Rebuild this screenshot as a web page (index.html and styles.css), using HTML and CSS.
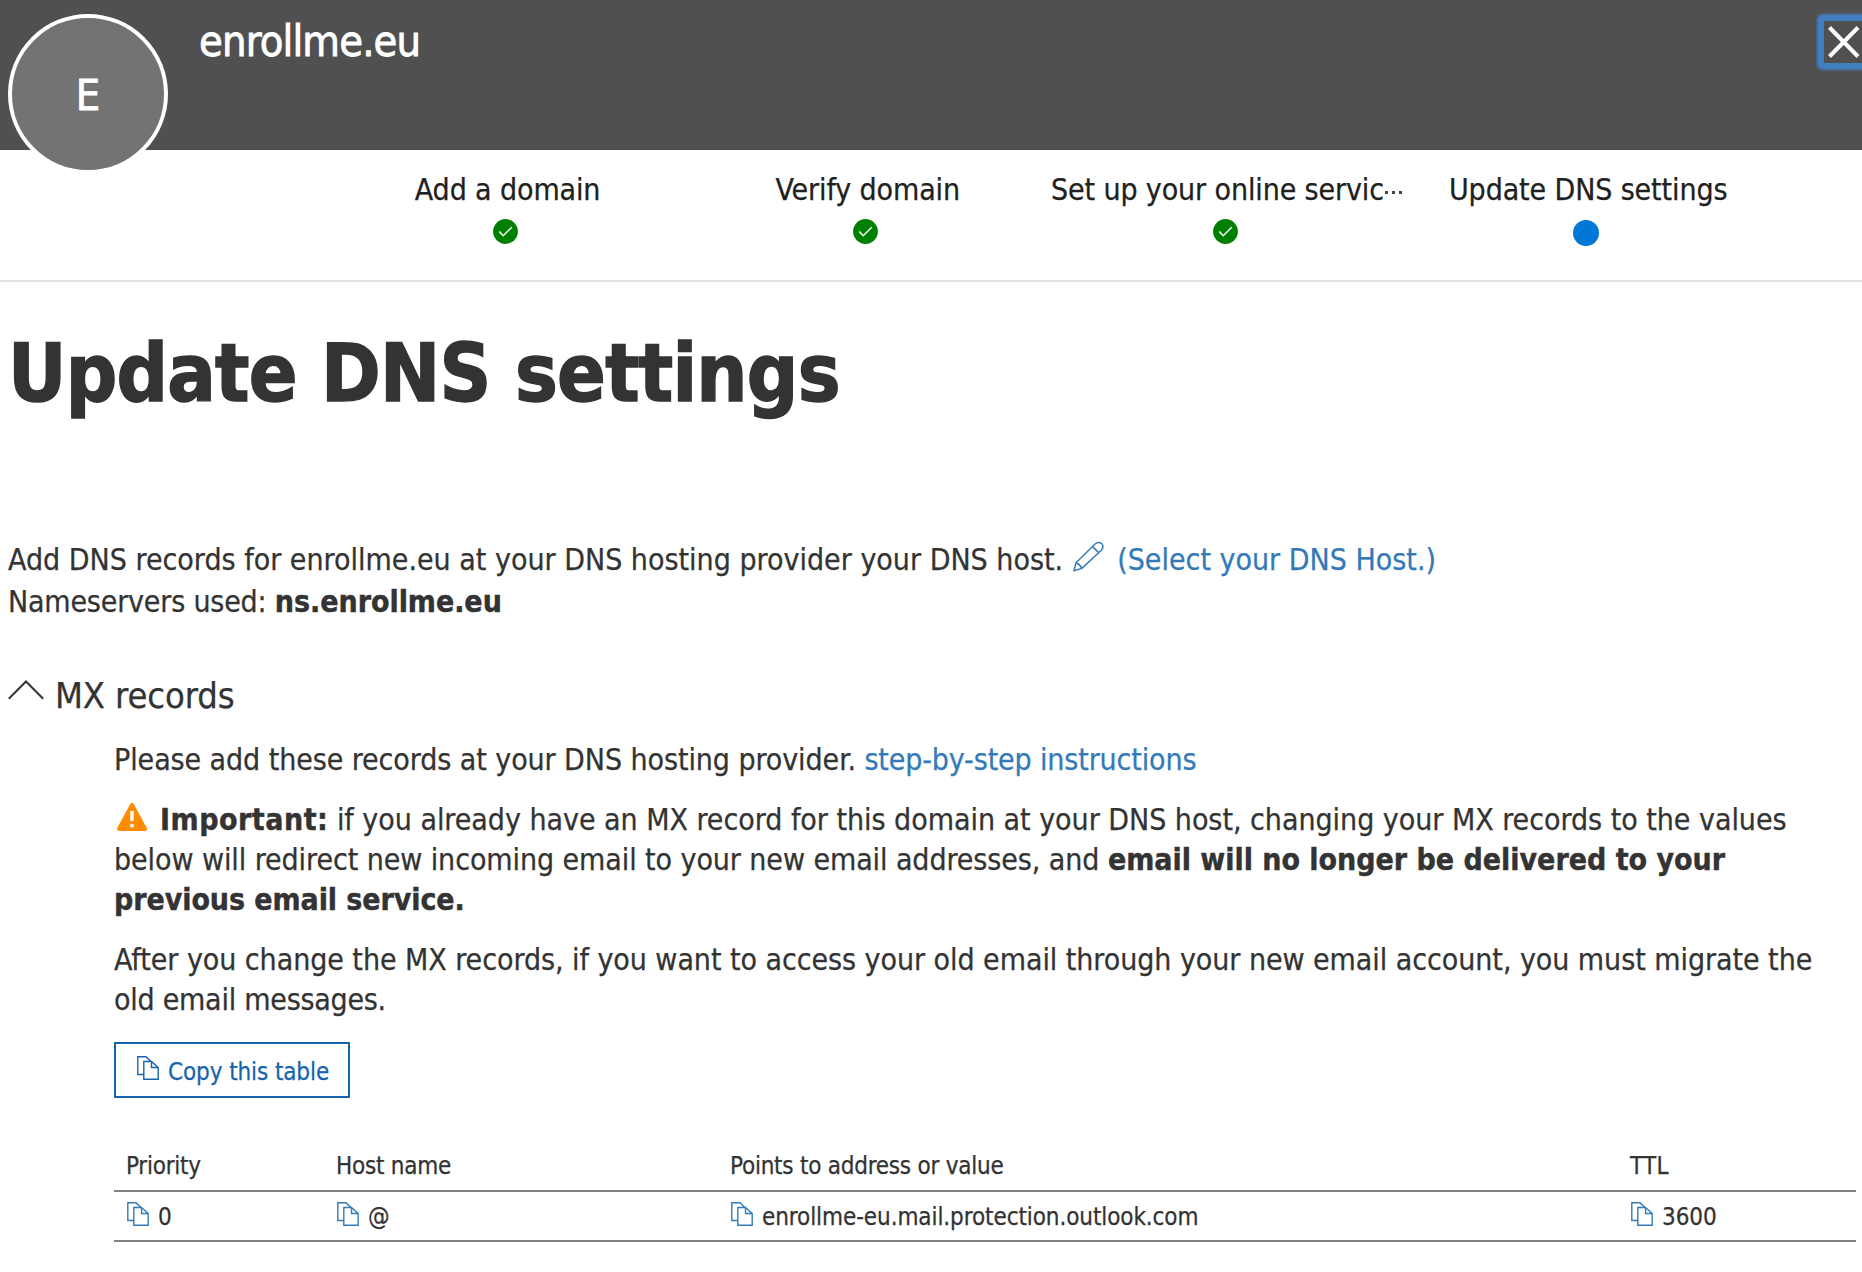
FILE: index.html
```
<!DOCTYPE html>
<html lang="en">
<head>
<meta charset="utf-8">
<title>Update DNS settings</title>
<link rel="stylesheet" href="styles.css">
</head>
<body>
<svg class="defs" width="0" height="0" aria-hidden="true">
  <symbol id="copy" viewBox="0 0 22 24">
    <path d="M6.5 18.5H.8V.8H9L14 5.5M6.8 5.5H14.5L21.2 11.5V23.2H6.8ZM14.5 5.5V11.5H21.2"/>
  </symbol>
  <symbol id="check" viewBox="0 0 25 25">
    <circle cx="12.5" cy="12.5" r="12.4"/>
    <path d="M6.3 12.6L10.2 16.7L18.8 8.3"/>
  </symbol>
</svg>

<header class="banner">
  <div class="avatar"><span>E</span></div>
  <h2 class="domain">enrollme.eu</h2>
  <button class="close" aria-label="Close">
    <svg viewBox="0 0 32 32"><path d="M1.5 1.5L30 30.5M30 1.5L1.5 30.5"/></svg>
  </button>
</header>

<ol class="steps">
  <li class="step"><span>Add a domain</span><svg><use href="#check"/></svg></li>
  <li class="step"><span>Verify domain</span><svg><use href="#check"/></svg></li>
  <li class="step"><span>Set up your online servic<i class="dots"></i></span><svg><use href="#check"/></svg></li>
  <li class="step"><span>Update DNS settings</span><b class="current"></b></li>
</ol>

<main class="content">
  <h1>Update DNS settings</h1>
  <p class="intro"><span>Add DNS records for enrollme.eu at your DNS hosting provider your DNS host.</span><svg class="pencil" viewBox="98 34 94 94"><path d="M101 124L107 100L165 43Q175 34 185 42Q193 52 184 62L125 117ZM157 51L177 70M107 100Q119 104 125 117"/></svg><a>(Select your DNS Host.)</a><br><span class="snug">Nameservers used: <strong>ns.enrollme.eu</strong></span></p>

  <h3 class="group"><svg viewBox="0 0 36 20"><path d="M.8 18.8L18 1.5L35.2 18.8"/></svg><span>MX records</span></h3>

  <section class="records">
    <p>Please add these records at your DNS hosting provider. <a class="guide">step-by-step instructions</a></p>
    <p class="notice"><svg class="warn" viewBox="0 0 30 28"><path class="tri" d="M15 2L28 26H2Z"/><path class="bang" d="M15 8V18"/><circle cx="15" cy="22.8" r="2"/></svg><strong class="important">Important:</strong> <span class="lead">if you already have an MX record for this domain at your DNS host, changing your MX records to the values</span><br>below will redirect new incoming email to your new email addresses, and <strong class="loss">email will no longer be delivered to your</strong><br><strong>previous email service.</strong></p>
    <p class="after">After you change the MX records, if you want to access your old email through your new email account, you must migrate the<br><span class="snug">old email messages.</span></p>
    <button class="copy-table"><svg class="copy"><use href="#copy"/></svg><span>Copy this table</span></button>
    <div class="table">
      <div class="row head"><span>Priority</span><span>Host name</span><span>Points to address or value</span><span class="ttl">TTL</span></div>
      <div class="row"><div><svg class="copy"><use href="#copy"/></svg><span>0</span></div><div><svg class="copy"><use href="#copy"/></svg><span>@</span></div><div><svg class="copy"><use href="#copy"/></svg><span>enrollme-eu.mail.protection.outlook.com</span></div><div><svg class="copy"><use href="#copy"/></svg><span>3600</span></div></div>
    </div>
  </section>
</main>
</body>
</html>
```
FILE: styles.css
```
* { box-sizing: border-box; }
body {
  margin: 0;
  background: #fff;
  color: #333;
  font-family: "DejaVu Sans Condensed", "DejaVu Sans", sans-serif;
  font-stretch: condensed;
  font-size: 30px;
  line-height: 40px;
  white-space: nowrap;
  overflow: hidden;
  -webkit-text-stroke: .25px currentColor;
}
svg { fill: none; stroke: currentColor; }
.defs { position: absolute; }
h1, h2, h3, p, ol { margin: 0; padding: 0; font-weight: 400; }
strong { font-weight: 700; -webkit-text-stroke-width: .4px; }
a { color: #337ab7; }
button { font: inherit; background: none; padding: 0; }

.banner { display: flex; align-items: flex-start; height: 150px; background: #505050; color: #fff; padding-left: 8px; -webkit-text-stroke-width: .8px; }
.avatar {
  width: 160px; height: 160px; margin-top: 14px; flex: none;
  border: 4px solid #fff; border-radius: 50%; background: #737373;
  display: flex; align-items: center; justify-content: center; font-size: 43px; padding-top: 1px;
}
.domain { margin: 15px 0 0 31px; font-size: 43px; line-height: 52px; letter-spacing: -.85px; }
.close {
  display: flex; flex: none; width: 60px; height: 54px; margin: 15px -16px 0 auto; color: #fff;
  border: 6px solid #427fc1; border-radius: 5px; padding: 5px 0 0 4px; box-shadow: 0 0 0 2px #4a6588;
}
.close svg { width: 32px; height: 32px; flex: none; stroke-width: 4; }

.steps { display: flex; height: 132px; padding: 20px 0 0 325.5px; border-bottom: 2px solid #e2e2e2; color: #212121; list-style: none; }
.step { width: 360.2px; display: flex; flex-direction: column; align-items: center; letter-spacing: -.12px; }
.step span { margin-left: 4px; }
.step:nth-child(3) span { margin-left: 2px; }
.step svg { width: 25px; height: 25px; margin-top: 9px; stroke: none; fill: #008000; }
#check path { fill: none; stroke: #fff; stroke-width: 1.5; }
.current { width: 26px; height: 26px; margin-top: 10px; border-radius: 50%; background: #0078d7; }
.dots { display: inline-block; width: 18px; height: 3px; margin-left: 1px; vertical-align: 6px; background: repeating-linear-gradient(90deg, #444 0 3px, transparent 3px 7px); }

.content { padding: 0 6px 0 8px; }
h1 { font-size: 80px; line-height: 100px; font-weight: 700; padding-top: 42px; letter-spacing: -.75px; -webkit-text-stroke-width: 1.4px; }
.intro { line-height: 42px; margin-top: 115px; }
.pencil { width: 31px; height: 31px; stroke: #337ab7; stroke-width: 4.5; vertical-align: -2px; margin: 0 13px 0 10px; }
.snug { letter-spacing: -.19px; }
.intro strong { letter-spacing: -.05px; }
.group { display: flex; font-size: 36px; line-height: 48px; margin-top: 49px; letter-spacing: -.1px; }
.group svg { width: 36px; height: 20px; stroke-width: 2; margin: 8px 11px 0 0; }

.records { padding: 20px 0 0 106px; }
.records p { margin-bottom: 20px; letter-spacing: -.08px; }
.records .guide { letter-spacing: -.14px; }
.records .important { letter-spacing: .5px; }
.records .important + .lead { letter-spacing: -.03px; }
.records .loss { letter-spacing: -.02px; }
.records .after { letter-spacing: -.053px; }
.records .after .snug { letter-spacing: -.25px; }
.warn { width: 30px; height: 28px; margin: 0 13px 0 3px; vertical-align: -1px; }
.tri { fill: #ff8c00; stroke: #ff8c00; stroke-width: 4; stroke-linejoin: round; }
.bang { stroke: #fff; stroke-width: 3.4; }
.warn circle { fill: #fff; stroke: none; }

.copy { width: 22px; height: 24px; flex: none; stroke: #337ab7; stroke-width: 1.4; }
.copy-table { display: flex; width: 236px; height: 56px; margin-top: 22px; border: 2px solid #1664ac; color: #1664ac; padding: 12px 0 0 21px; font-size: 24px; line-height: 32px; letter-spacing: -.1px; }
.copy-table .copy { stroke: #1664ac; margin-right: 9px; }
.table { margin-top: 44px; font-size: 24px; line-height: 32px; }
.row { display: grid; grid-template-columns: 210px 394px 900px 1fr; height: 50px; border-bottom: 2px solid #808080; padding: 9px 0 0 12px; letter-spacing: -.09px; }
.row > div { display: flex; }
.row .copy { margin: 1px 9px 0 1px; }
.row.head { padding-top: 8px; letter-spacing: -.24px; }
.row .ttl { letter-spacing: .3px; }
```
